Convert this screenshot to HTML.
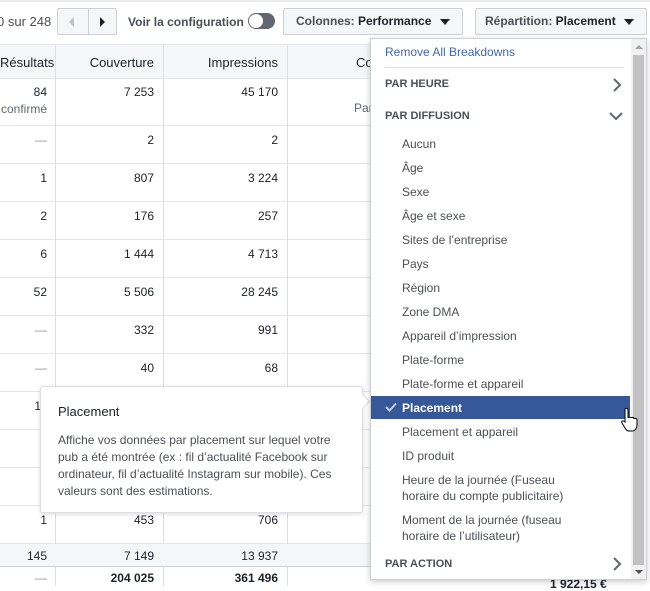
<!DOCTYPE html><html><head><meta charset="utf-8"><style>
body{margin:0;width:650px;height:586px;overflow:hidden;background:#fff;font-family:"Liberation Sans",Arial,sans-serif;font-size:12px;color:#1d2129;position:relative}
.a{position:absolute}
.r{text-align:right}
.vl{position:absolute;top:45px;bottom:0;width:1px;background:#dddfe2}
.hl{position:absolute;left:0;width:370px;height:1px;background:#e5e6e9}
.btn{position:absolute;top:8px;height:27px;background:#f5f6f7;border:1px solid #ced0d4;border-radius:2px;box-sizing:border-box;font-size:12px;line-height:25px;color:#4b4f56}
.mi{position:absolute;left:402px;font-size:12px;color:#4b4f56;line-height:16px}
.sh{position:absolute;left:385px;font-size:11px;font-weight:bold;color:#4b4f56}
</style></head><body>
<div class="a" style="left:0;top:0;width:650px;height:2px;background:#e9ebee"></div>
<div class="a" style="left:-3px;top:14px;font-size:13px;color:#4b4f56">0 sur 248</div>
<div class="btn" style="left:57px;width:60px;"><div class="a" style="left:30px;top:0;width:1px;height:25px;background:#ced0d4"></div>
<div class="a" style="left:11px;top:8px;width:0;height:0;border-top:5px solid transparent;border-bottom:5px solid transparent;border-right:5px solid #bec3c9"></div>
<div class="a" style="left:42px;top:8px;width:0;height:0;border-top:5px solid transparent;border-bottom:5px solid transparent;border-left:5px solid #1d2129"></div></div>
<div class="a" style="left:128px;top:15px;color:#4b4f56;font-size:12px;font-weight:bold">Voir la configuration</div>
<div class="a" style="left:248px;top:13px;width:27px;height:16px;border-radius:8px;background:#606770"></div>
<div class="a" style="left:249px;top:14px;width:14px;height:14px;border-radius:7px;background:#fff"></div>
<div class="btn" style="left:283px;width:180px;padding-left:12px;font-weight:bold">Colonnes: <span style="color:#1d2129">Performance</span><span class="a" style="left:156px;top:10px;border-left:5px solid transparent;border-right:5px solid transparent;border-top:6px solid #1d2129"></span></div>
<div class="btn" style="left:475px;width:172px;padding-left:9px;font-weight:bold">Répartition: <span style="color:#1d2129">Placement</span><span class="a" style="left:148px;top:10px;border-left:5px solid transparent;border-right:5px solid transparent;border-top:6px solid #1d2129"></span></div>
<!-- table -->
<div class="a" style="left:0;top:45px;width:370px;height:33px;background:#f5f6f7"></div>
<div class="hl" style="top:44px"></div><div class="hl" style="top:78px"></div>
<div class="vl" style="left:55px"></div><div class="vl" style="left:163px"></div><div class="vl" style="left:287px"></div>
<div class="a r" style="left:0;width:47px;top:55px;font-size:13px">Résultats</div>
<div class="a r" style="left:56px;width:98px;top:55px;font-size:13px">Couverture</div>
<div class="a r" style="left:164px;width:114px;top:55px;font-size:13px">Impressions</div>
<div class="a" style="left:356px;top:55px;font-size:13px">Co</div>
<div class="a r" style="left:0;width:47px;top:85px">84<br><span style="color:#606770;line-height:20px">confirmé</span></div>
<div class="a r" style="left:56px;width:98px;top:85px">7 253</div>
<div class="a r" style="left:164px;width:114px;top:85px">45 170</div>
<div class="a" style="left:354px;top:101px;color:#606770">Par</div>
<div class="hl" style="top:125px"></div><div class="hl" style="top:163px"></div><div class="hl" style="top:201px"></div><div class="hl" style="top:239px"></div><div class="hl" style="top:277px"></div><div class="hl" style="top:315px"></div><div class="hl" style="top:353px"></div><div class="hl" style="top:391px"></div><div class="hl" style="top:429px"></div><div class="hl" style="top:467px"></div><div class="hl" style="top:505px"></div>
<div class="a" style="left:0;top:543px;width:370px;height:23px;background:#f5f6f7;border-top:1px solid #e5e6e9"></div>
<div class="hl" style="top:566px;background:#ccd0d5"></div>
<div class="a r" style="left:0;width:47px;top:133px;color:#90949c">—</div><div class="a r" style="left:56px;width:98px;top:133px">2</div><div class="a r" style="left:164px;width:114px;top:133px">2</div>
<div class="a r" style="left:0;width:47px;top:171px">1</div><div class="a r" style="left:56px;width:98px;top:171px">807</div><div class="a r" style="left:164px;width:114px;top:171px">3 224</div>
<div class="a r" style="left:0;width:47px;top:209px">2</div><div class="a r" style="left:56px;width:98px;top:209px">176</div><div class="a r" style="left:164px;width:114px;top:209px">257</div>
<div class="a r" style="left:0;width:47px;top:247px">6</div><div class="a r" style="left:56px;width:98px;top:247px">1 444</div><div class="a r" style="left:164px;width:114px;top:247px">4 713</div>
<div class="a r" style="left:0;width:47px;top:285px">52</div><div class="a r" style="left:56px;width:98px;top:285px">5 506</div><div class="a r" style="left:164px;width:114px;top:285px">28 245</div>
<div class="a r" style="left:0;width:47px;top:323px;color:#90949c">—</div><div class="a r" style="left:56px;width:98px;top:323px">332</div><div class="a r" style="left:164px;width:114px;top:323px">991</div>
<div class="a r" style="left:0;width:47px;top:361px;color:#90949c">—</div><div class="a r" style="left:56px;width:98px;top:361px">40</div><div class="a r" style="left:164px;width:114px;top:361px">68</div>
<div class="a r" style="left:0;width:41px;top:399px">1</div>
<div class="a r" style="left:0;width:47px;top:513px">1</div><div class="a r" style="left:56px;width:98px;top:513px">453</div><div class="a r" style="left:164px;width:114px;top:513px">706</div>
<div class="a r" style="left:0;width:47px;top:549px">145</div><div class="a r" style="left:56px;width:98px;top:549px">7 149</div><div class="a r" style="left:164px;width:114px;top:549px">13 937</div>
<div class="a r" style="left:0;width:47px;top:571px;color:#90949c">—</div><div class="a r" style="left:56px;width:98px;top:571px;font-weight:bold">204 025</div><div class="a r" style="left:164px;width:114px;top:571px;font-weight:bold">361 496</div>
<div class="a" style="left:550px;top:577px;font-size:12px;font-weight:bold">1 922,15 €</div>
<!-- tooltip -->
<div class="a" style="left:40px;top:386px;width:323px;height:127px;background:#fff;border:1px solid #dddfe2;border-radius:3px;box-shadow:0 1px 4px rgba(0,0,0,.15);box-sizing:border-box"></div>
<div class="a" style="left:357px;top:396px;width:10px;height:10px;background:#fff;border-top:1px solid #dddfe2;border-right:1px solid #dddfe2;transform:rotate(45deg)"></div>
<div class="a" style="left:58px;top:404px;font-size:13px;color:#1d2129">Placement</div>
<div class="a" style="left:58px;top:432px;width:290px;font-size:12px;line-height:17px;color:#4b4f56">Affiche vos données par placement sur lequel votre pub a été montrée (ex : fil d’actualité Facebook sur ordinateur, fil d’actualité Instagram sur mobile). Ces valeurs sont des estimations.</div>
<!-- menu -->
<div class="a" style="left:370px;top:38px;width:277px;height:542px;background:#fff;border:1px solid #ccd0d5;box-sizing:border-box;box-shadow:0 2px 6px rgba(0,0,0,.2)"></div>
<div class="a" style="left:631px;top:39px;width:15px;height:540px;background:#f1f1f1"></div>
<div class="a" style="left:633px;top:55px;width:11px;height:510px;background:#c1c1c1"></div>
<div class="a" style="left:635px;top:45px;border-left:4px solid transparent;border-right:4px solid transparent;border-bottom:4px solid #a3a3a3"></div>
<div class="a" style="left:635px;top:570px;border-left:4px solid transparent;border-right:4px solid transparent;border-top:4px solid #505050"></div>
<div class="a" style="left:385px;top:45px;font-size:12px;color:#4267b2">Remove All Breakdowns</div>
<div class="a" style="left:385px;top:67px;width:239px;height:1px;background:#dddfe2"></div>
<div class="sh" style="top:78px">PAR HEURE</div>
<svg class="a" style="left:612px;top:78px" width="10" height="14"><path d="M2 1l6 6-6 6" stroke="#606770" stroke-width="2" fill="none"/></svg>
<div class="sh" style="top:110px">PAR DIFFUSION</div>
<svg class="a" style="left:609px;top:111px" width="14" height="10"><path d="M1 2l6 6 6-6" stroke="#606770" stroke-width="2" fill="none"/></svg>
<div class="mi" style="top:136px">Aucun</div>
<div class="mi" style="top:160px">Âge</div>
<div class="mi" style="top:184px">Sexe</div>
<div class="mi" style="top:208px">Âge et sexe</div>
<div class="mi" style="top:232px">Sites de l’entreprise</div>
<div class="mi" style="top:256px">Pays</div>
<div class="mi" style="top:280px">Région</div>
<div class="mi" style="top:304px">Zone DMA</div>
<div class="mi" style="top:328px">Appareil d’impression</div>
<div class="mi" style="top:352px">Plate-forme</div>
<div class="mi" style="top:376px">Plate-forme et appareil</div>
<div class="a" style="left:371px;top:396px;width:259px;height:23px;background:#365899"></div>
<svg class="a" style="left:385px;top:402px" width="12" height="10"><path d="M1 5l3.5 3.5L11 1.5" stroke="#c8d0e0" stroke-width="2" fill="none"/></svg>
<div class="mi" style="top:400px;color:#fff;font-weight:bold">Placement</div>
<div class="mi" style="top:424px">Placement et appareil</div>
<div class="mi" style="top:448px">ID produit</div>
<div class="mi" style="top:472px">Heure de la journée (Fuseau<br>horaire du compte publicitaire)</div>
<div class="mi" style="top:512px">Moment de la journée (fuseau<br>horaire de l’utilisateur)</div>
<div class="sh" style="top:558px">PAR ACTION</div>
<svg class="a" style="left:612px;top:557px" width="10" height="14"><path d="M2 1l6 6-6 6" stroke="#606770" stroke-width="2" fill="none"/></svg>
<svg class="a" style="left:619px;top:407px" width="20" height="26"><path d="M6 2c1-1 3-1 3 1v8c0-1 3-1 3 0 0-1 3-1 3 1 0-1 3-1 3 1v5c0 3-2 6-5 6h-3c-2 0-3-1-4-3l-3-5c-1-2 1-3 3-1V3z" fill="#fff" stroke="#000" stroke-width="1"/></svg>
</body></html>
